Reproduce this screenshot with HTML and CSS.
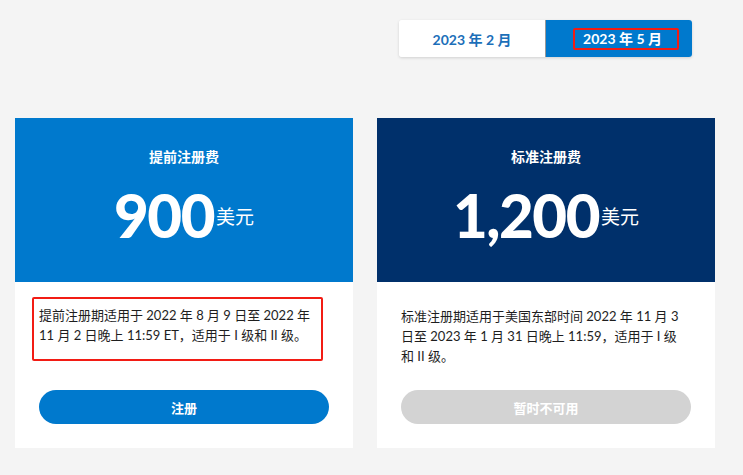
FILE: index.html
```html
<!DOCTYPE html>
<html lang="zh">
<head>
    <meta charset="UTF-8">
    <meta name="viewport" content="width=device-width, initial-scale=1.0">
    <title>注册费</title>
    <link rel="stylesheet" href="styles.css">
</head>
<body>

<div class="toggle-row">
    <div class="toggle">
        <button class="toggle-btn">2023 年 2 月</button>
        <button class="toggle-btn active"><span class="mark">2023 年 5 月</span></button>
    </div>
</div>

<div class="cards">
    <!-- early registration -->
    <div class="card">
        <div class="card-head early">
            <div class="card-title">提前注册费</div>
            <div class="price"><span class="amount">900</span><span class="unit">美元</span></div>
        </div>
        <div class="card-body">
            <div class="desc marked">提前注册期适用于 2022 年 8 月 9 日至 2022 年 11 月 2 日晚上 11:59 ET，适用于 I 级和 II 级。</div>
            <button class="pill">注册</button>
        </div>
    </div>

    <!-- standard registration -->
    <div class="card">
        <div class="card-head standard">
            <div class="card-title">标准注册费</div>
            <div class="price"><span class="amount">1,200</span><span class="unit">美元</span></div>
        </div>
        <div class="card-body">
            <div class="desc">标准注册期适用于美国东部时间 2022 年 11 月 3 日至 2023 年 1 月 31 日晚上 11:59，适用于 I 级和 II 级。</div>
            <button class="pill disabled" disabled>暂时不可用</button>
        </div>
    </div>
</div>

</body>
</html>
```

FILE: styles.css
```css
body {
    font-family: Lato, "Noto Sans CJK SC", sans-serif;
    background-color: #f4f4f4;
    margin: 0;
    padding: 20px 0 0 0;
    color: #222;
}
.toggle-row {
    display: flex;
    justify-content: flex-end;
    padding-right: 51px;
}
.toggle {
    display: flex;
    width: 293px;
    height: 37px;
    border-radius: 3px;
    overflow: hidden;
    box-shadow: 0 1px 3px rgba(0, 0, 0, 0.15);
}
.toggle-btn {
    flex: 1;
    border: none;
    background-color: #fff;
    color: #1c6fb9;
    font-family: inherit;
    font-size: 14px;
    font-weight: 700;
    padding: 0;
}
.toggle-btn.active {
    background-color: #0079cd;
    color: #fff;
    border-left: 1px solid #999;
}
.mark {
    display: inline-block;
    border: 2px solid #f21c14;
    border-radius: 2px;
    padding: 1px 15px 1px 8px;
    margin-left: 14px;
    line-height: 16px;
}
.cards {
    display: flex;
    gap: 24px;
    padding: 61px 0 0 15px;
}
.card {
    width: 338px;
    background-color: #fff;
    display: flex;
    flex-direction: column;
}
.card-head {
    height: 164px;
    box-sizing: border-box;
    padding-top: 30px;
    color: #fff;
    text-align: center;
}
.early {
    background-color: #0079cd;
}
.standard {
    background-color: #00306b;
}
.card-title {
    font-size: 14px;
    font-weight: 700;
    line-height: 18px;
}
.price {
    display: flex;
    justify-content: center;
    align-items: center;
    height: 70px;
    margin-top: 14px;
}
.amount {
    font-size: 60px;
    font-weight: 900;
    line-height: 70px;
    letter-spacing: -1.5px;
}
.unit {
    font-size: 19px;
    margin-left: 2px;
}
.card-body {
    height: 166px;
    box-sizing: border-box;
    padding: 24px;
    display: flex;
    flex-direction: column;
}
.desc {
    font-size: 13px;
    line-height: 20px;
    color: #1e1e1e;
    padding-right: 5px;
}
.desc.marked {
    align-self: flex-start;
    width: 278px;
    border: 2px solid #f21c14;
    border-radius: 2px;
    padding: 6px 4px 14px 5px;
    margin: -9px 0 0 -7px;
}
.pill {
    margin-top: auto;
    width: 100%;
    height: 34px;
    flex-shrink: 0;
    border: none;
    border-radius: 17px;
    background-color: #0079cd;
    color: #fff;
    font-family: inherit;
    font-size: 13px;
    font-weight: 700;
}
.pill.disabled {
    background-color: #d3d3d3;
}
```
